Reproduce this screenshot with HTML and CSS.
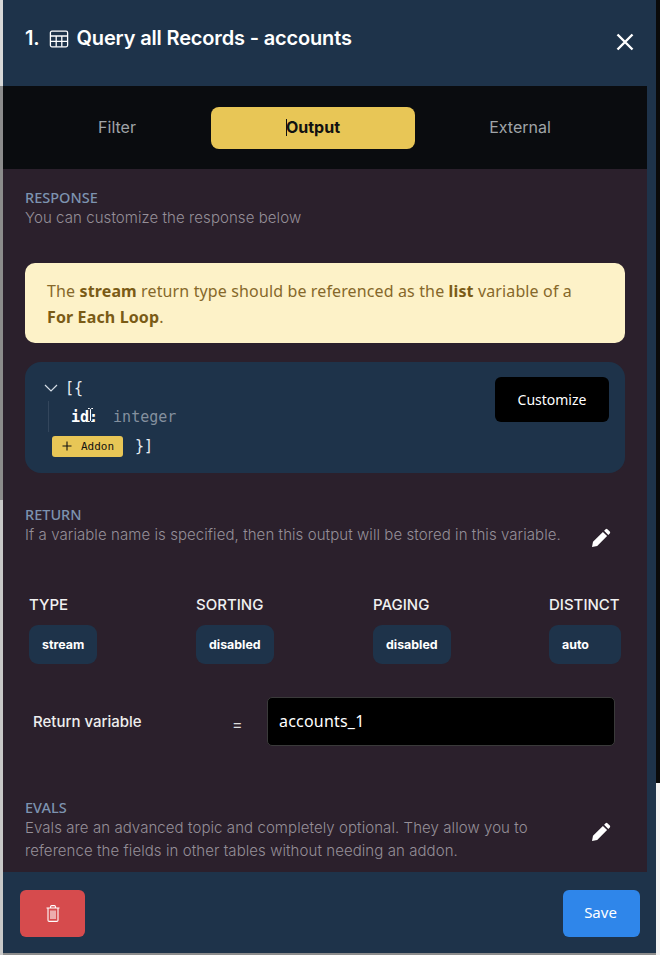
FILE: index.html
```html
<!DOCTYPE html>
<html lang="en">
<head>
<meta charset="utf-8">
<title>Query all Records</title>
<link rel="stylesheet" href="styles.css">
</head>
<body>
<div class="page">
  <div class="modal">
    <header class="head">
      <h1 class="title"><span>1.</span>
        <svg class="table-icon" viewBox="0 0 20 18" width="20" height="18" fill="none" stroke="currentColor" stroke-width="1.3"><rect x="1.4" y="1.2" width="17.2" height="15.6" rx="1.5"/><path d="M1.4 6h17.2M1.4 11.4h17.2M7.2 6v10.8M12.8 6v10.8"/></svg>
        <span>Query all Records - accounts</span></h1>
      <svg class="close" viewBox="0 0 18 18" width="18" height="18" fill="none" stroke="currentColor" stroke-width="2.4"><path d="M1.5 1.5l15 15M16.5 1.5l-15 15"/></svg>
    </header>
    <div class="body">
      <nav class="tabs">
        <div class="tab">Filter</div>
        <div class="tab active"><span class="caret"></span>Output</div>
        <div class="tab">External</div>
      </nav>
      <main class="content">
        <section class="sec response">
          <div class="sec-label">RESPONSE</div>
          <div class="sec-desc">You can customize the response below</div>
        </section>
        <div class="notice">The <b>stream</b> return type should be referenced as the <b>list</b> variable of a<br><b>For Each Loop</b>.</div>
        <div class="schema">
          <div class="code">
            <div class="code-line"><svg class="chev" viewBox="0 0 14 8" width="14" height="8" fill="none" stroke="currentColor" stroke-width="1.2"><path d="M1 1l6 6 6-6"/></svg><span class="brace">[{</span></div>
            <div class="code-field"><b>id:</b><span class="dim">integer</span>
              <svg class="ibeam" viewBox="0 0 7 14" width="7" height="14" fill="none" stroke="#fff" stroke-width="1"><path d="M1 .5h1.5l1 1 1-1H6M3.5 1.5v11M1 13.5h1.5l1-1 1 1H6"/></svg>
            </div>
            <div class="code-line last"><span class="addon"><svg viewBox="0 0 10 10" width="10" height="10" fill="none" stroke="currentColor" stroke-width="1.1"><path d="M5 .5v9M.5 5h9"/></svg>Addon</span><span class="brace">}]</span></div>
          </div>
          <button class="customize">Customize</button>
        </div>
        <section class="sec row-sec ret">
          <div>
            <div class="sec-label">RETURN</div>
            <div class="sec-desc">If a variable name is specified, then this output will be stored in this variable.</div>
          </div>
          <svg class="pencil" viewBox="0 0 20 20" width="20" height="20"><path fill="currentColor" d="M14.6 1.2a1.3 1.3 0 0 1 1.8 0l2.4 2.4a1.3 1.3 0 0 1 0 1.8l-1.5 1.5-4.2-4.2zM11.9 3.9l4.2 4.2-9.9 9.9-5.2 1 1-5.2z"/></svg>
        </section>
        <div class="opts">
          <div class="opt"><div class="opt-label">TYPE</div><span class="pill">stream</span></div>
          <div class="opt"><div class="opt-label">SORTING</div><span class="pill">disabled</span></div>
          <div class="opt"><div class="opt-label">PAGING</div><span class="pill">disabled</span></div>
          <div class="opt opt-wide"><div class="opt-label">DISTINCT</div><span class="pill">auto</span></div>
        </div>
        <div class="ret-var">
          <label class="rv-label">Return variable</label>
          <span class="eq">=</span>
          <div class="rv-input">accounts_1</div>
        </div>
        <section class="sec row-sec evals">
          <div>
            <div class="sec-label">EVALS</div>
            <div class="sec-desc">Evals are an advanced topic and completely optional. They allow you to reference the fields in other tables without needing an addon.</div>
          </div>
          <svg class="pencil" viewBox="0 0 20 20" width="20" height="20"><path fill="currentColor" d="M14.6 1.2a1.3 1.3 0 0 1 1.8 0l2.4 2.4a1.3 1.3 0 0 1 0 1.8l-1.5 1.5-4.2-4.2zM11.9 3.9l4.2 4.2-9.9 9.9-5.2 1 1-5.2z"/></svg>
        </section>
      </main>
    </div>
    <footer class="foot">
      <button class="btn del"><svg viewBox="0 0 14 17" width="14" height="17" fill="none" stroke="currentColor" stroke-width="1.1"><path d="M.5 3h13M2 3v12.2c0 .7.5 1.2 1.2 1.2h7.6c.7 0 1.2-.5 1.2-1.2V3M4.6 3V1.6c0-.6.4-1 1-1h2.8c.6 0 1 .4 1 1V3M5 5.5v8.5M7 5.5v8.5M9 5.5v8.5"/></svg></button>
      <button class="btn save">Save</button>
    </footer>
  </div>
</div>
</body>
</html>
```
FILE: styles.css
```css
* { box-sizing: border-box; }
html, body { margin: 0; height: 100%; overflow: hidden; }
body { background: #e4e4e4; font-family: Inter, "Liberation Sans", sans-serif; }
.page {
  width: 660px;
  height: 955px;
  padding-left: 3px;
  background:
    linear-gradient(#0a0a0a 783px, #f2f2f2 783px) right top / 4px 100% no-repeat,
    linear-gradient(#d8d8d8 86px, #8c8c8c 86px, #8c8c8c 500px, #c8c8c8 500px) left top / 3px 100% no-repeat,
    #8c8c8c;
}
.modal { width: 653px; height: 953px; display: flex; flex-direction: column; background: #1e334a; }
.head { height: 86px; flex: none; padding: 25px 22px 0; display: flex; justify-content: space-between; color: #fff; }
.title { margin: 0; font-size: 20px; line-height: 27px; font-weight: 600; letter-spacing: -0.16px; display: flex; align-items: center; height: 27px; color: #fff; }
.table-icon { margin: 0 8px 0 9px; }
.close { margin-top: 8px; color: #fff; }
.body { flex: 1; display: flex; flex-direction: column; width: 644px; min-height: 0; }
.tabs { height: 83px; flex: none; background: #0a0c0f; display: grid; grid-template-columns: 182px 204px 1fr; gap: 3px; padding: 0 25px 0 23px; align-items: center; }
.tab { text-align: center; font-size: 16px; color: #a0a4a8; position: relative; top: -1px; }
.tab.active { top: 0; height: 42px; line-height: 41px; background: #e8c656; color: #111; font-weight: 700; border-radius: 8px; }
.caret { display: inline-block; width: 1px; height: 17px; background: #111; vertical-align: -3px; margin-right: -1px; }
.content { flex: 1; background: #2b202c; padding: 20px 22px 0; min-height: 0; overflow: hidden; }
.sec-label { font-family: "Noto Sans", sans-serif; font-size: 14.5px; line-height: 17px; font-weight: 500; color: #7d93b0; }
.sec-desc { font-size: 15px; line-height: 23px; font-weight: 300; letter-spacing: 0.075px; color: #958f98; }
.notice { margin-top: 34px; height: 80px; width: 600px; background: #fdf2c8; border-radius: 10px; padding: 15px 22px; font-family: "Noto Sans", sans-serif; font-size: 16px; line-height: 26px; letter-spacing: 0.13px; color: #86682a; }
.notice b { font-weight: 700; color: #7a5b16; }
.schema { margin-top: 19px; width: 600px; height: 111px; background: #1e334a; border-radius: 16px; padding: 15px 16px 0 19px; display: flex; justify-content: space-between; }
.code { margin-top: -2px; font-family: "DejaVu Sans Mono", monospace; font-size: 15px; color: #e6edf3; }
.code-line { display: flex; align-items: center; height: 26px; }
.chev { color: #d5dde6; margin-right: 7px; }
.code-field { height: 31px; margin-left: 4px; padding-left: 22px; border-left: 1px solid #33465c; display: flex; align-items: center; color: #fff; position: relative; }
.code-field b { font-weight: 700; margin-right: 15px; }
.ibeam { position: absolute; left: 38px; top: 7px; }
.dim { color: #84909e; }
.code-line.last { margin-left: 8px; height: 28px; }
.addon { width: 71px; height: 21px; background: #e8c656; border-radius: 3px; color: #111; font-size: 11px; display: inline-flex; align-items: center; padding-left: 10px; gap: 9px; margin-right: 12px; }
.customize { width: 114px; height: 45px; background: #000; color: #fff; border: 0; border-radius: 6px; font-family: "Noto Sans", sans-serif; font-size: 14px; }
.row-sec { display: flex; justify-content: space-between; align-items: flex-start; }
.pencil { color: #fff; flex: none; margin-top: 22px; }
.ret { margin-top: 33px; width: 586px; }
.opts { margin-top: 48px; margin-left: 4px; display: grid; grid-template-columns: 167px 177px 176px 72px; width: 592px; }
.opt { display: flex; flex-direction: column; align-items: flex-start; }
.opt-wide { align-items: stretch; }
.opt-label { font-size: 15px; line-height: 17px; font-weight: 500; color: #f1f1f1; white-space: nowrap; }
.pill { margin-top: 12px; height: 39px; line-height: 39px; padding: 0 13px; background: #1e334a; border-radius: 9px; font-size: 12.4px; font-weight: 700; color: #fff; }
.ret-var { margin-top: 33px; margin-left: 8px; display: flex; align-items: center; height: 49px; }
.rv-label { width: 199px; font-size: 15px; font-weight: 500; color: #eee; }
.eq { width: 35px; font-size: 16px; color: #ddd; position: relative; top: 2px; }
.rv-input { width: 348px; height: 49px; background: #000; border: 1px solid #3a3a3a; border-radius: 5px; color: #fff; font-family: "Noto Sans", sans-serif; font-size: 16px; letter-spacing: 0.2px; line-height: 47px; padding-left: 11px; }
.evals { margin-top: 53px; width: 586px; }
.evals .sec-desc { width: 530px; }
.evals .pencil { margin-top: 23px; }
.foot { height: 81px; flex: none; display: flex; justify-content: space-between; align-items: flex-start; padding: 18px 16px 0 17px; background: #1e334a; }
.btn { border: 0; height: 47px; border-radius: 6px; color: #fff; display: flex; align-items: center; justify-content: center; }
.del { width: 65px; background: #d64b4d; }
.save { width: 77px; background: #2f86ea; font-family: "Noto Sans", sans-serif; font-size: 15px; padding: 0 2px 3px 0; }
```
